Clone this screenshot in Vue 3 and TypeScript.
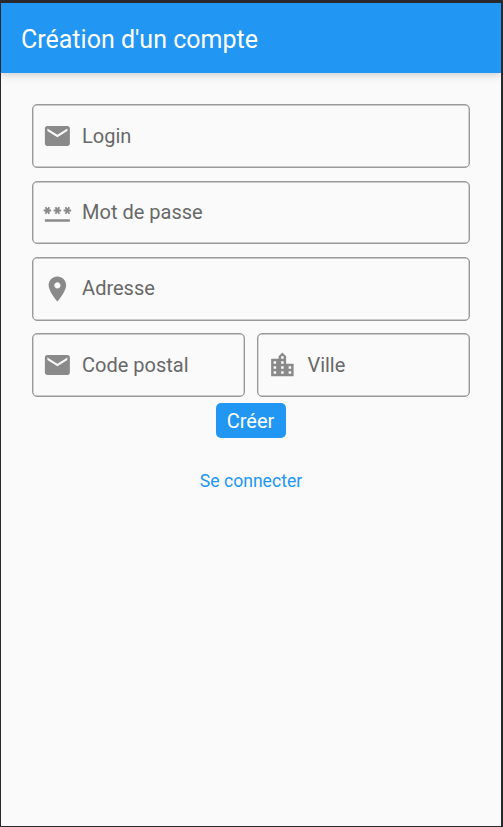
<script setup lang="ts">
import { reactive } from 'vue'

type FieldKey = 'login' | 'password' | 'address' | 'postalCode' | 'city'

interface Field {
  key: FieldKey
  label: string
  type: string
  icon: string
  half?: boolean
}

const mail =
  'M20 4H4c-1.1 0-1.99.9-1.99 2L2 18c0 1.1.9 2 2 2h16c1.1 0 2-.9 2-2V6c0-1.1-.9-2-2-2zm0 4l-8 5-8-5V6l8 5 8-5v2z'
const password =
  'M2 17h20v2H2v-2zm1.15-4.05L4 11.47l.85 1.48 1.3-.75-.85-1.48H7v-1.5H5.3l.85-1.47L4.85 7 4 8.47 3.15 7l-1.3.75.85 1.47H1v1.5h1.7l-.85 1.48 1.3.75zm6.7-.75l1.3.75.85-1.48.85 1.48 1.3-.75-.85-1.48H15v-1.5h-1.7l.85-1.47-1.3-.75L12 8.47 11.15 7l-1.3.75.85 1.47H9v1.5h1.7l-.85 1.48zM23 9.22h-1.7l.85-1.47-1.3-.75L20 8.47 19.15 7l-1.3.75.85 1.47H17v1.5h1.7l-.85 1.48 1.3.75.85-1.48.85 1.48 1.3-.75-.85-1.48H23v-1.5z'
const place =
  'M12 2C8.13 2 5 5.13 5 9c0 5.25 7 13 7 13s7-7.75 7-13c0-3.87-3.13-7-7-7zm0 9.5c-1.38 0-2.5-1.12-2.5-2.5s1.12-2.5 2.5-2.5 2.5 1.12 2.5 2.5-1.12 2.5-2.5 2.5z'
const city =
  'M15 11V5l-3-3-3 3v2H3v14h18V11h-6zm-8 8H5v-2h2v2zm0-4H5v-2h2v2zm0-4H5V9h2v2zm6 8h-2v-2h2v2zm0-4h-2v-2h2v2zm0-4h-2V9h2v2zm0-4h-2V5h2v2zm6 12h-2v-2h2v2zm0-4h-2v-2h2v2z'

const fields: Field[] = [
  { key: 'login', label: 'Login', type: 'text', icon: mail },
  { key: 'password', label: 'Mot de passe', type: 'password', icon: password },
  { key: 'address', label: 'Adresse', type: 'text', icon: place },
  { key: 'postalCode', label: 'Code postal', type: 'text', icon: mail, half: true },
  { key: 'city', label: 'Ville', type: 'text', icon: city, half: true },
]

const form = reactive<Record<FieldKey, string>>({
  login: '',
  password: '',
  address: '',
  postalCode: '',
  city: '',
})
</script>

<template>
  <div class="screen">
    <header class="app-bar">
      <h1 class="title">Création d'un compte</h1>
    </header>
    <form class="form" @submit.prevent>
      <div class="fields">
        <label v-for="f in fields" :key="f.key" class="field" :class="{ half: f.half }">
          <svg class="icon" viewBox="-0.3 0 24 24" aria-hidden="true"><path :d="f.icon" /></svg>
          <input v-model="form[f.key]" class="input" :type="f.type" :placeholder="f.label" />
        </label>
      </div>
      <button class="submit" type="submit">Créer</button>
      <button class="link" type="button">Se connecter</button>
    </form>
  </div>
</template>

<style>
body {
  margin: 0;
  overflow: hidden;
}
</style>

<style scoped>
.screen {
  box-sizing: border-box;
  height: 100vh;
  border: solid #29282c;
  border-width: 3px 2px 1px 1px;
  background: #fafafa;
  font-family: Roboto, sans-serif;
  overflow: hidden;
}

.app-bar {
  box-sizing: border-box;
  display: flex;
  align-items: center;
  height: 70px;
  padding: 3px 20px 0;
  background: #2196f3;
  box-shadow: 0 2px 5px rgba(0, 0, 0, 0.1), 0 5px 9px rgba(0, 0, 0, 0.06);
}

.title {
  margin: 0;
  color: #fff;
  font-size: 25px;
  font-weight: 400;
  line-height: 30px;
}

.form {
  display: flex;
  flex-direction: column;
  align-items: center;
  padding: 31.4px 31px 0;
}

.fields {
  display: grid;
  grid-template-columns: 1fr 1fr;
  gap: 12.6px;
  width: 100%;
}

.field {
  box-sizing: border-box;
  display: flex;
  align-items: center;
  grid-column: span 2;
  min-width: 0;
  height: 63.7px;
  padding-left: 9.1px;
  border: 1px solid #999;
  border-radius: 5px;
  box-shadow: inset 0 0 0 0.4px #999;
}

.half {
  grid-column: span 1;
}

.icon {
  flex: none;
  width: 30px;
  height: 30px;
  fill: #8a8a8a;
}

.input {
  flex: 1;
  min-width: 0;
  margin-left: 10px;
  padding: 0 0 1px;
  border: 0;
  outline: 0;
  background: transparent;
  color: #212121;
  font: 400 20px/24px Roboto, sans-serif;
}

.input::placeholder {
  color: #686868;
  opacity: 1;
}

.submit {
  width: 70px;
  height: 35px;
  margin-top: 6px;
  padding: 1px 1px 0 0;
  border: 0;
  border-radius: 5px;
  background: #2196f3;
  color: #fff;
  font: 400 20px/34px Roboto, sans-serif;
}

.link {
  margin-top: 32px;
  padding: 0;
  border: 0;
  background: none;
  color: #2196f3;
  font: 400 17.6px/22px Roboto, sans-serif;
}
</style>
